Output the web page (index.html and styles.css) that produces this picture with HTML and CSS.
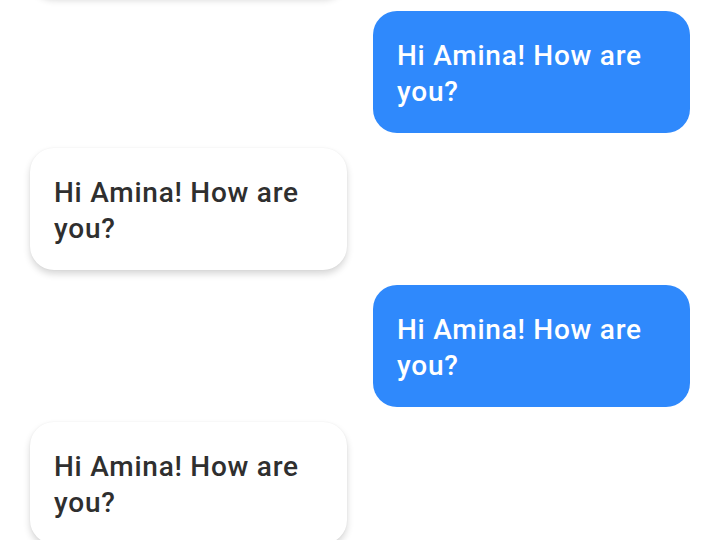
FILE: index.html
```html
<!DOCTYPE html>
<html>
<head>
<meta charset="utf-8">
<link rel="stylesheet" href="styles.css">
</head>
<body>
<div class="chat">
  <div class="msg in">Hi Amina! How are you?</div>
  <div class="msg out">Hi Amina! How are you?</div>
  <div class="msg in">Hi Amina! How are you?</div>
  <div class="msg out">Hi Amina! How are you?</div>
  <div class="msg in">Hi Amina! How are you?</div>
</div>
</body>
</html>
```
FILE: styles.css
```css
html, body {
  margin: 0;
  padding: 0;
  background: #ffffff;
  overflow: hidden;
  height: 540px;
}
.chat {
  display: flex;
  flex-direction: column;
  gap: 15px;
  padding: 0 30px;
  margin-top: -126px;
  font-family: Roboto, "Noto Sans", sans-serif;
}
.msg {
  box-sizing: border-box;
  max-width: 317px;
  padding: 27px 24px 23px;
  font-size: 28px;
  font-weight: 500;
  line-height: 36px;
  letter-spacing: 0.75px;
  border-radius: 24px;
}
.in {
  align-self: flex-start;
  background: #ffffff;
  color: #2f2f2f;
  box-shadow: 0 4px 7px rgba(0, 0, 0, 0.16), 0 0 2px rgba(0, 0, 0, 0.05);
}
.out {
  align-self: flex-end;
  background: #2f89fc;
  color: #ffffff;
}
```
